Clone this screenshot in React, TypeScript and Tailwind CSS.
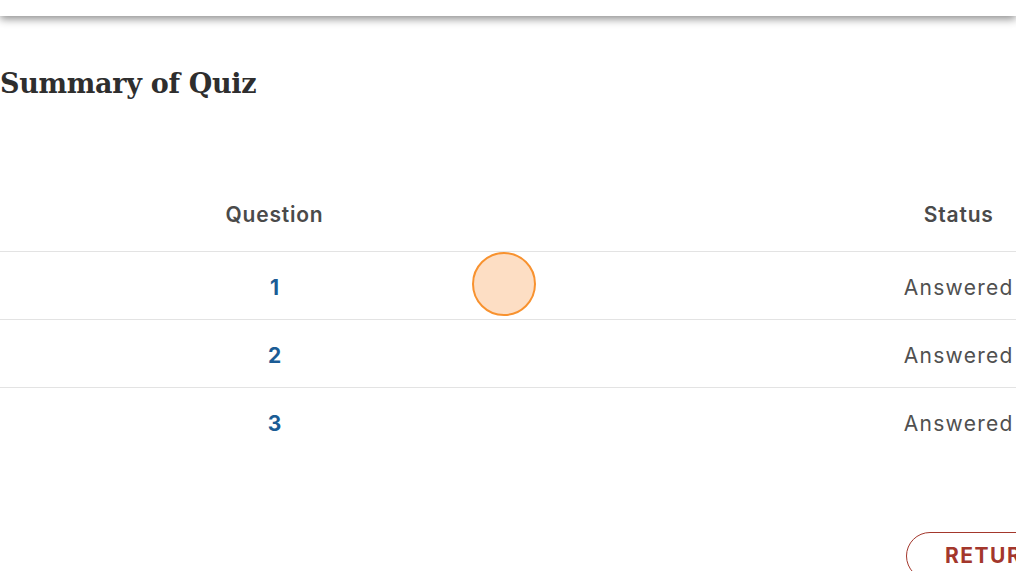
import React from "react";

const rows = [1, 2, 3];

export default function App() {
  return (
    <div className="relative h-[571px] w-[1016px] overflow-hidden bg-white font-['Inter',sans-serif]">
      <div className="h-[16px] bg-white shadow-[0_3px_8px_rgba(0,0,0,0.45)]" />

      <h1 className="mt-[50px] text-[27px] font-bold leading-[36px] text-[#2e2e2e] font-['DejaVu_Serif',serif] tracking-[-0.3px]">
        Summary of Quiz
      </h1>

      <table className="mt-[88px] w-[1096px] table-fixed border-collapse">
        <colgroup>
          <col className="w-[548px]" />
          <col className="w-[272px]" />
          <col className="w-[274px]" />
        </colgroup>
        <thead>
          <tr className="border-b border-[#e3e3e3]">
            <th className="h-[61px] pb-[20px] text-center align-bottom text-[21px] font-semibold tracking-[0.8px] text-[#4a4a4a]">
              Question
            </th>
            <th />
            <th className="h-[61px] pb-[20px] text-center align-bottom text-[21px] font-semibold tracking-[0.8px] text-[#4a4a4a]">
              Status
            </th>
          </tr>
        </thead>
        <tbody>
          {rows.map((n) => (
            <tr key={n} className="border-b border-[#e3e3e3] last:border-b-0">
              <td className="h-[68px] pt-[5px] text-center text-[21px] font-bold text-[#1b5c95]">{n}</td>
              <td />
              <td className="h-[68px] pt-[5px] text-center text-[21px] tracking-[1.3px] text-[#505050]">Answered</td>
            </tr>
          ))}
        </tbody>
      </table>

      <div className="mt-[77px] flex justify-end">
        <button className="-mr-[120px] h-[48px] w-[230px] rounded-full border border-[#a3372c] pl-[38px] text-left text-[21px] font-bold tracking-[1.5px] text-[#a3372c]">
          RETURN
        </button>
      </div>

      <div className="absolute left-[472px] top-[252px] h-[64px] w-[64px] rounded-full border-[2.5px] border-[#f8922f] bg-[#fddec4]" />
    </div>
  );
}
